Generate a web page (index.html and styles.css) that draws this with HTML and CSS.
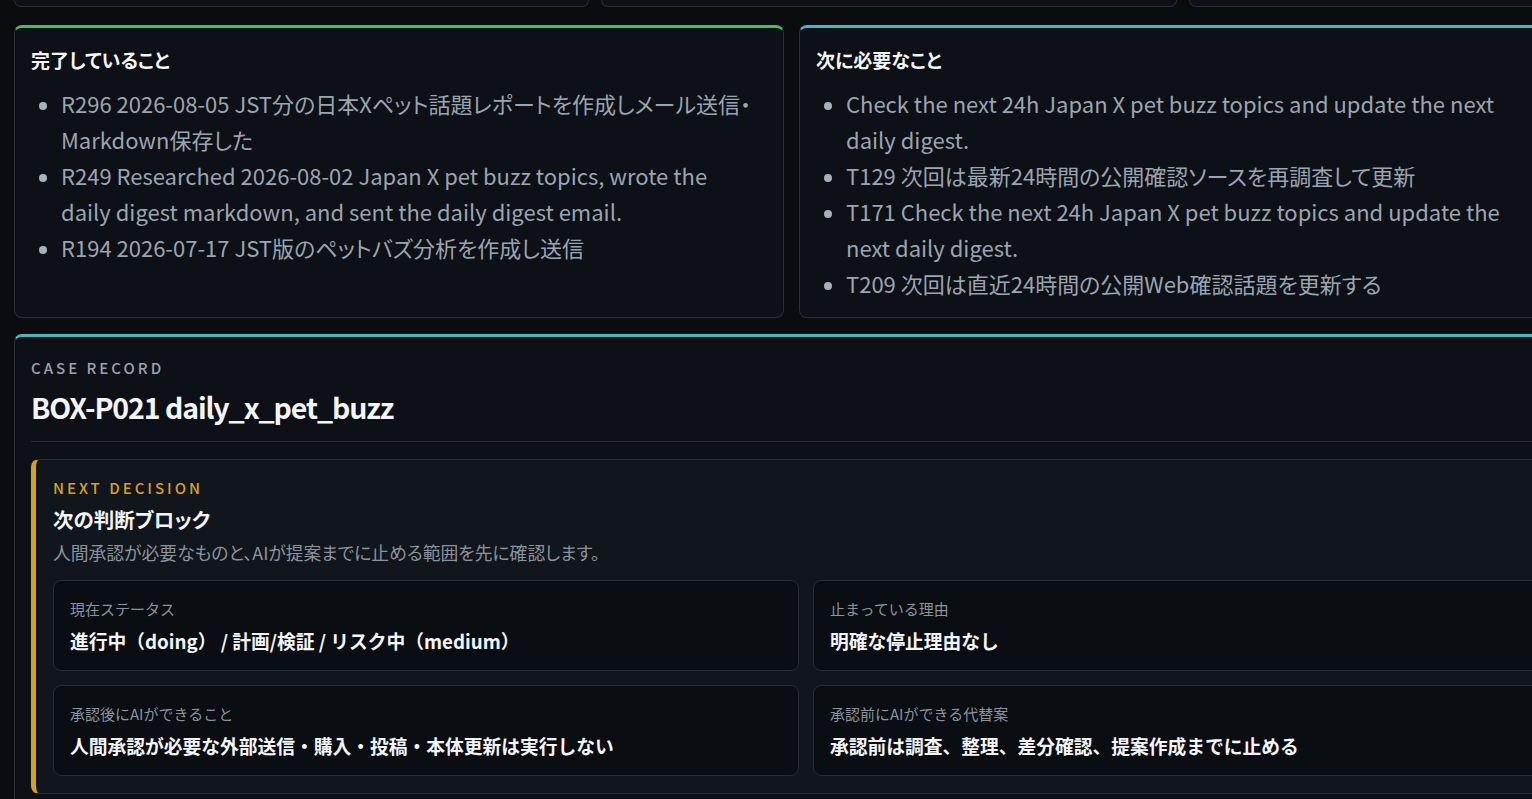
FILE: index.html
```html
<!DOCTYPE html>
<html lang="ja">
<head>
    <meta charset="UTF-8">
    <meta name="viewport" content="width=device-width, initial-scale=1.0">
    <title>BOX-P021 daily_x_pet_buzz</title>
    <link rel="stylesheet" href="styles.css">
</head>
<body>
    <main class="page">
        <div class="stubRow">
            <div class="stub"></div>
            <div class="stub"></div>
            <div class="stub"></div>
        </div>

        <div class="progressRow">
            <section class="panel panel-done">
                <h2>完了していること</h2>
                <ul class="itemList">
                    <li>R296 2026-08-05 JST分の日本Xペット話題レポートを作成しメール送信・Markdown保存した</li>
                    <li>R249 Researched 2026-08-02 Japan X pet buzz topics, wrote the daily digest markdown, and sent the daily digest email.</li>
                    <li>R194 2026-07-17 JST版のペットバズ分析を作成し送信</li>
                </ul>
            </section>
            <section class="panel panel-next">
                <h2>次に必要なこと</h2>
                <ul class="itemList">
                    <li>Check the next 24h Japan X pet buzz topics and update the next daily digest.</li>
                    <li>T129 次回は最新24時間の公開確認ソースを再調査して更新</li>
                    <li>T171 Check the next 24h Japan X pet buzz topics and update the next daily digest.</li>
                    <li>T209 次回は直近24時間の公開Web確認話題を更新する</li>
                </ul>
            </section>
        </div>

        <section class="panel caseRecord">
            <p class="eyebrow">CASE RECORD</p>
            <h1>BOX-P021 daily_x_pet_buzz</h1>

            <div class="decision">
                <p class="eyebrow eyebrow-warn">NEXT DECISION</p>
                <h3>次の判断ブロック</h3>
                <p class="lead">人間承認が必要なものと、AIが提案までに止める範囲を先に確認します。</p>
                <div class="factGrid">
                    <div class="fact">
                        <span class="factLabel">現在ステータス</span>
                        <strong>進行中（doing） / 計画/検証 / リスク中（medium）</strong>
                    </div>
                    <div class="fact">
                        <span class="factLabel">止まっている理由</span>
                        <strong>明確な停止理由なし</strong>
                    </div>
                    <div class="fact">
                        <span class="factLabel">承認後にAIができること</span>
                        <strong>人間承認が必要な外部送信・購入・投稿・本体更新は実行しない</strong>
                    </div>
                    <div class="fact">
                        <span class="factLabel">承認前にAIができる代替案</span>
                        <strong>承認前は調査、整理、差分確認、提案作成までに止める</strong>
                    </div>
                </div>
            </div>
        </section>
    </main>
</body>
</html>
```

FILE: styles.css
```css
html, body {
    overflow: hidden;
}
body {
    margin: 0;
    background-color: #0a0c10;
    color: #e6edf3;
    font-family: "Noto Sans CJK JP", "Noto Sans", sans-serif;
}
.page {
    width: 1582px;
    padding-left: 14px;
}
.stubRow {
    display: grid;
    grid-template-columns: 575px 576px 1fr;
    gap: 12px;
}
.stub {
    height: 6px;
    background-color: #0d1016;
    border: 1px solid #2a2f36;
    border-top: none;
    border-radius: 0 0 8px 8px;
}
.progressRow {
    display: grid;
    grid-template-columns: 770px 770px;
    gap: 15px;
    margin-top: 18px;
}
.panel {
    background-color: #0d1016;
    border: 1px solid #2a2f36;
    border-top: 3px solid #46b6c6;
    border-radius: 8px;
    padding: 16px 17px 16px 16px;
}
.panel-done {
    border-top-color: #3cc163;
}
.panel h2 {
    margin: 0 0 9px;
    font-size: 19px;
    line-height: 32px;
    font-weight: 700;
    color: #f3f5f8;
    font-feature-settings: "palt";
}
.itemList {
    margin: 0;
    padding: 0 13px 0 30px;
}
.itemList li {
    font-size: 22px;
    line-height: 36px;
    color: #9ba5b1;
    font-feature-settings: "palt";
}
.itemList li::marker {
    color: #a9b1bb;
    font-size: 20px;
}
.caseRecord {
    margin-top: 16px;
    padding-top: 21px;
}
.eyebrow {
    margin: 0;
    font-size: 15px;
    line-height: 20px;
    letter-spacing: 3px;
    color: #9aa3ad;
    font-weight: 500;
}
.caseRecord h1 {
    margin: 9px 0 0;
    padding-bottom: 14px;
    font-size: 28.5px;
    line-height: 40px;
    font-weight: 700;
    color: #f3f5f8;
    border-bottom: 1px solid #2a2f36;
    letter-spacing: -1.1px;
}
.decision {
    margin-top: 17px;
    background-color: #11151c;
    border: 1px solid #262b33;
    border-left: 5px solid #d6a21a;
    border-radius: 8px;
    padding: 18px 18px 17px 17px;
}
.eyebrow-warn {
    color: #d6a21a;
}
.decision h3 {
    margin: 6px 0 0;
    font-size: 20.5px;
    line-height: 30px;
    font-weight: 700;
    color: #f3f5f8;
    font-feature-settings: "palt";
}
.lead {
    margin: 6px 0 0;
    font-size: 17.8px;
    line-height: 24px;
    color: #8b949e;
    font-feature-settings: "palt";
}
.factGrid {
    display: grid;
    grid-template-columns: 1fr 1fr;
    gap: 14px;
    margin-top: 16px;
}
.fact {
    display: flex;
    flex-direction: column;
    gap: 9px;
    height: 91px;
    box-sizing: border-box;
    padding: 18px 16px 0;
    background-color: #0a0d12;
    border: 1px solid #272c34;
    border-radius: 8px;
}
.factLabel {
    font-size: 15px;
    line-height: 20px;
    color: #8b949e;
}
.fact strong {
    font-size: 18.75px;
    line-height: 26px;
    font-weight: 700;
    color: #f3f5f8;
}
```
